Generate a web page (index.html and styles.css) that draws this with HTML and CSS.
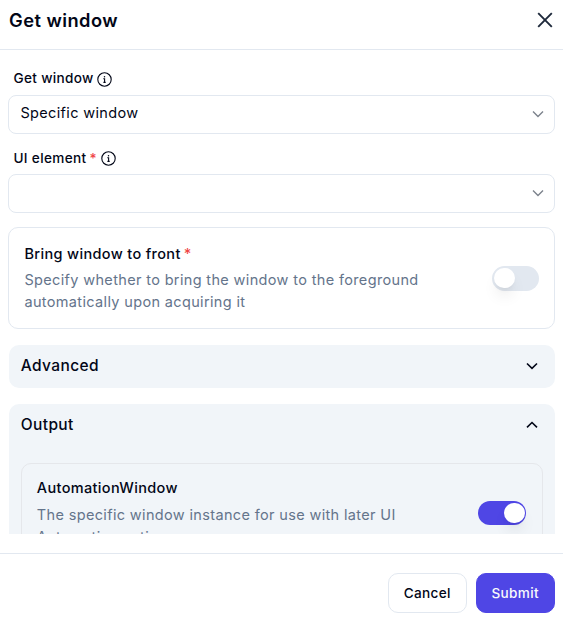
FILE: index.html
```html
<!DOCTYPE html>
<html lang="en">
<head>
<meta charset="utf-8">
<title>Get window</title>
<link rel="stylesheet" href="styles.css">
</head>
<body>
<div class="dialog">
  <header class="header">
    <h1 class="title">Get window</h1>
    <svg class="close" viewBox="0 0 16 16"><path d="M1.2 1.2 14.8 14.8M14.8 1.2 1.2 14.8"/></svg>
  </header>
  <main class="body">
    <div class="label"><span>Get window</span>
      <svg class="info" viewBox="0 0 15 15"><circle cx="7.5" cy="7.5" r="6.7"/><path d="M6.3 6.7h1.3v3.6M6.4 10.4h2.3"/><circle class="dot" cx="7.5" cy="4.7" r=".75"/></svg>
    </div>
    <div class="select"><span>Specific window</span>
      <svg class="chevron muted" viewBox="0 0 12 8"><path d="M1 1.5 6 6.4 11 1.5"/></svg>
    </div>
    <div class="label second"><span>UI element</span><span class="star">*</span>
      <svg class="info" viewBox="0 0 15 15"><circle cx="7.5" cy="7.5" r="6.7"/><path d="M6.3 6.7h1.3v3.6M6.4 10.4h2.3"/><circle class="dot" cx="7.5" cy="4.7" r=".75"/></svg>
    </div>
    <div class="select tall"><span></span>
      <svg class="chevron muted" viewBox="0 0 12 8"><path d="M1 1.5 6 6.4 11 1.5"/></svg>
    </div>
    <section class="card">
      <div class="text">
        <h2 class="name">Bring window to front<span class="star">*</span></h2>
        <p class="desc">Specify whether to bring the window to the foreground automatically upon acquiring it</p>
      </div>
      <div class="switch"><i class="knob"></i></div>
    </section>
    <section class="panel">
      <div class="bar"><span>Advanced</span>
        <svg class="chevron" viewBox="0 0 12 8"><path d="M1 1.5 6 6.4 11 1.5"/></svg>
      </div>
    </section>
    <section class="panel output">
      <div class="bar"><span>Output</span>
        <svg class="chevron" viewBox="0 0 12 8"><path d="M1 6.4 6 1.5 11 6.4"/></svg>
      </div>
      <div class="card inner">
        <div class="text">
          <h2 class="name">AutomationWindow</h2>
          <p class="desc">The specific window instance for use with later UI Automation actions</p>
        </div>
        <div class="switch on"><i class="knob"></i></div>
      </div>
    </section>
  </main>
  <footer class="footer">
    <button class="btn">Cancel</button>
    <button class="btn primary">Submit</button>
  </footer>
</div>
</body>
</html>
```
FILE: styles.css
```css
* { box-sizing: border-box; }
body {
  margin: 0;
  background: #fff;
  color: #020617;
  font-family: Inter, "Liberation Sans", sans-serif;
  font-size: 14.5px;
  letter-spacing: 0.35px;
}
h1, h2, p { margin: 0; }
svg { display: block; flex: none; fill: none; stroke: currentColor; }
.dialog { display: flex; flex-direction: column; height: 618px; overflow: hidden; }
.header {
  display: flex;
  align-items: center;
  justify-content: space-between;
  flex: none;
  height: 50px;
  padding: 0 10px 9px 9px;
  border-bottom: 1px solid #e2e8f0;
}
.title { margin-top: -1px; font-size: 18.3px; line-height: 24px; font-weight: 600; letter-spacing: 0.46px; }
.close { width: 16px; height: 16px; margin-top: -1px; color: #1e293b; stroke-width: 1.9; }
.body { flex: none; height: 484px; padding: 18px 8px 0 8.4px; overflow: hidden; }
.label {
  display: flex;
  align-items: center;
  height: 20px;
  margin-bottom: 7px;
  padding-left: 5px;
  font-size: 13.6px;
  font-weight: 500;
  letter-spacing: 0.34px;
}
.label.second { margin: 14px 0 6px; }
.info { width: 15px; height: 15px; margin: 3px 0 0 3px; stroke-width: 1.1; }
.label.second .info { margin: 1px 0 0 4px; }
.dot { fill: currentColor; stroke: none; }
.star { margin-left: 3px; color: #ef4444; }
.select {
  display: flex;
  align-items: center;
  justify-content: space-between;
  height: 38.5px;
  padding: 0 10px 3px 11px;
  border: 1px solid #e2e8f0;
  border-radius: 8px;
}
.select.tall { height: 39.5px; }
.chevron { width: 12px; height: 8px; margin-top: 1px; stroke-width: 1.6; }
.chevron.muted { margin-top: 2px; color: #7c828c; stroke-width: 1.4; }
.card {
  display: flex;
  align-items: center;
  height: 102px;
  margin-top: 14px;
  padding: 0 15px 0 15px;
  border: 1px solid #e2e8f0;
  border-radius: 10px;
}
.text { flex: 1; margin-top: 0.5px; }
.name { font-size: 14.5px; line-height: 22px; font-weight: 500; margin-bottom: 4px; }
.desc { width: 410px; color: #64748b; line-height: 22px; }
.switch {
  flex: none;
  width: 47px;
  height: 25px;
  margin-top: 0;
  padding: 2px;
  border-radius: 13px;
  background: #e2e8f0;
}
.knob {
  display: block;
  width: 20.5px;
  height: 20.5px;
  border-radius: 50%;
  background: #fff;
  box-shadow: 0 10px 15px -3px rgba(0, 0, 0, .1), 0 4px 6px -4px rgba(0, 0, 0, .1);
}
.switch.on { width: 48.5px; height: 24px; margin: -1px 1px 0 0; padding: 1.5px; background: #4f46e5; }
.switch.on .knob { margin-left: auto; }
.panel { margin: 15.5px 0 0 0.4px; border-radius: 10px; background: #f1f5f9; }
.bar {
  display: flex;
  align-items: center;
  justify-content: space-between;
  height: 43.5px;
  padding: 0 17px 2px 12px;
  font-size: 15.5px;
  font-weight: 500;
  letter-spacing: 0.38px;
}
.output { height: 200px; padding-right: 12px; }
.output .bar { margin-right: -12px; }
.inner { margin: 15.5px 0 0 12px; border-color: #e5e7eb; }
.inner .text { margin-top: -2px; }
.inner .name { margin-bottom: 5px; }
.inner .desc { width: 375px; }
.footer {
  display: flex;
  justify-content: flex-end;
  gap: 9px;
  flex: none;
  margin-top: 19px;
  padding: 19px 8px 0;
  border-top: 1px solid #e2e8f0;
}
.btn {
  width: 78.5px;
  height: 40px;
  padding: 0;
  border: 1px solid #e2e8f0;
  border-radius: 10px;
  background: #fff;
  color: #020617;
  font: 500 13.6px Inter, "Liberation Sans", sans-serif;
  letter-spacing: 0.34px;
}
.primary { width: 79.5px; border-color: #4f46e5; background: #4f46e5; color: #f8fafc; }
```
